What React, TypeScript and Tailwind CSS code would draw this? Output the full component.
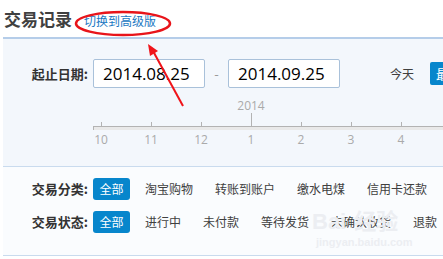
import { Fragment } from 'react'

const months = ['10', '11', '12', '1', '2', '3', '4']

const categories = ['淘宝购物', '转账到账户', '缴水电煤', '信用卡还款']

const statuses = ['进行中', '未付款', '等待发货', '未确认收货', '退款']

const DateInput = ({ value }: { value: string }) => (
  <div
    className="
      w-[112px]
      h-[29px]
      shrink-0
      bg-white
      border
      border-[#a9c1da]
      rounded-[2px]
      pl-[9px]
      flex
      items-center
      text-[17px]
      text-black
      font-['Open_Sans',sans-serif]
    "
  >
    {value}
  </div>
)

const FilterRow = ({ label, items }: { label: string; items: string[] }) => (
  <div className="flex items-center h-[22px] whitespace-nowrap">
    <div className="w-[85px] shrink-0 mr-[5px] text-right text-[13px] font-bold text-[#333]">
      {label}
    </div>
    <div className="w-[37px] h-[22px] shrink-0 rounded-[3px] bg-[#0786cc] text-white text-[12px] flex items-center justify-center">
      全部
    </div>
    <div className="ml-[4px] flex shrink-0">
      {items.map((item) => (
        <span key={item} className="shrink-0 px-[11px] text-[12px] text-[#404040]">
          {item}
        </span>
      ))}
    </div>
  </div>
)

export default function App() {
  return (
    <div className="relative w-[443px] h-[259px] overflow-hidden bg-white font-['Noto_Sans_CJK_SC',sans-serif]">
      {/* header */}
      <div className="h-[37px] pl-[4px] pt-[7px] flex items-baseline whitespace-nowrap">
        <span className="text-[17px] leading-[24px] font-bold text-[#404040]">交易记录</span>
        <span className="ml-[12px] text-[12px] text-[#1a78c2]">切换到高级版</span>
      </div>

      {/* date panel */}
      <div className="ml-[3px] border-t-2 border-[#b5cde9] bg-[#f3f7fc] h-[129px] whitespace-nowrap">
        <div className="pt-[20px] flex items-center h-[49px]">
          <div className="w-[85px] shrink-0 mr-[5px] text-right text-[13px] font-bold text-[#333]">
            起止日期:
          </div>
          <DateInput value="2014.08.25" />
          <div className="w-[23px] shrink-0 text-center text-[13px] text-[#999]">-</div>
          <DateInput value="2014.09.25" />
          <span className="ml-[50px] shrink-0 text-[12px] text-[#404040]">今天</span>
          <div className="ml-[16px] shrink-0 h-[23px] px-[6px] rounded-[2px] bg-[#0786cc] text-white text-[13px] flex items-center">
            最近一周
          </div>
        </div>

        {/* timeline */}
        <div className="mt-[11px] ml-[73px] flex items-end h-[27px]">
          {months.map((m) => (
            <div key={m} className="w-[50px] shrink-0 flex flex-col items-center justify-end">
              {m === '1' ? (
                <Fragment>
                  <span className="text-[12px] leading-[14px] text-[#aaa] font-['Open_Sans',sans-serif]">2014</span>
                  <div className="w-px h-[13px] bg-[#b3b3b3]" />
                </Fragment>
              ) : (
                <div className="w-px h-[4px] bg-[#b3b3b3]" />
              )}
            </div>
          ))}
        </div>
        <div className="ml-[90px] h-[4px] border-l border-[#b3b3b3]">
          <div className="h-px bg-[#b3b3b3]" />
          <div className="h-[3px] bg-[#e9e9e9]" />
        </div>
        <div className="mt-[3px] ml-[73px] flex">
          {months.map((m) => (
            <div
              key={m}
              className="w-[50px] shrink-0 text-center text-[12px] leading-[14px] text-[#aaa] font-['Open_Sans',sans-serif]"
            >
              {m}
            </div>
          ))}
        </div>
      </div>

      {/* filters */}
      <div className="ml-[3px] border-t border-b border-[#c9dbee] bg-[#fafcfe] h-[90px] pt-[11px] flex flex-col gap-[11px]">
        <FilterRow label="交易分类:" items={categories} />
        <FilterRow label="交易状态:" items={statuses} />
      </div>

      {/* watermark */}
      <div className="absolute left-[312px] top-[208px] pointer-events-none text-[22px] font-bold leading-none text-[#eceef2] font-['Liberation_Sans',sans-serif]">
        Bai<span className="ml-[8px] font-['Noto_Sans_CJK_SC',sans-serif]">经验</span>
      </div>
      <div className="absolute left-[316px] top-[234px] pointer-events-none text-[11px] font-bold text-[#eceef2] font-['Liberation_Sans',sans-serif]">
        jingyan.baidu.com
      </div>

      {/* annotation */}
      <svg className="absolute left-0 top-0 pointer-events-none" width="443" height="259" viewBox="0 0 443 259">
        <ellipse cx="123" cy="23.5" rx="47" ry="11.5" fill="none" stroke="#e8141a" strokeWidth="2.5" />
        <line x1="183" y1="106" x2="153" y2="51" stroke="#f0141a" strokeWidth="2" />
        <polygon points="148,44 158,51 150,56" fill="#f0141a" />
      </svg>
    </div>
  )
}
